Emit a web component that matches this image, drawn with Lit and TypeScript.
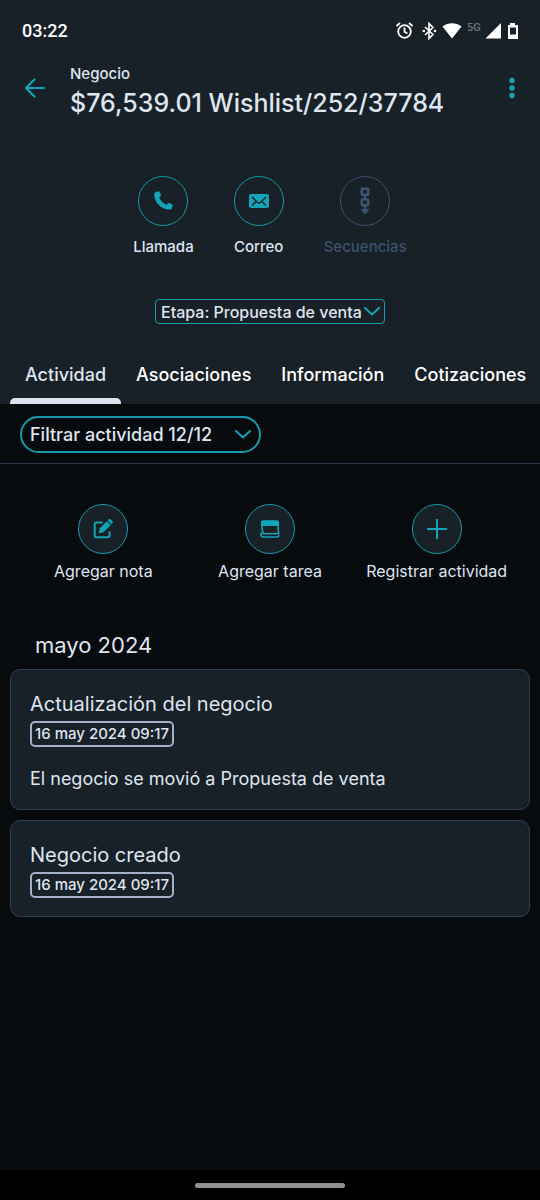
import { LitElement, html, svg, css, nothing } from "lit";
import { customElement, property, state } from "lit/decorators.js";
import { classMap } from "lit/directives/class-map.js";

const icons = {
  phone: svg`<path fill="currentColor" d="M3.200.9 5.500.3c.5-.1 1 .1 1.200.6l1.200 3c.2.5.1 1-.3 1.300L6.200 6.500c.9 2.700 4 6 7.200 7.400l1.400-1.500c.3-.4.8-.5 1.300-.3l3 1.400c.5.2.7.7.6 1.200l-.6 2.400c-.2.7-.7 1.200-1.400 1.300C9.500 19.600.8 11.500 1.200 3.300 1.300 2 2 1.200 3.200.9Z"/>`,
  mail: svg`<rect x="0" y="3" width="20" height="14" rx="2.200" fill="currentColor"/>
    <path d="M3 6l5.300 5.200c1 .9 2.400.9 3.400 0L17 6M3 14.500l3.700-3.600M17 14.500l-3.700-3.600" fill="none" stroke="#182127" stroke-width="1.500"/>`,
  sequence: svg`<g fill="none" stroke="currentColor" stroke-width="2.600">
    <rect x="6.800" y="-2.300" width="6.400" height="6" rx=".6"/><rect x="6.800" y="8.300" width="6.400" height="6" rx="1.600"/>
    <path d="M10 4v4M10 15v5"/></g><path d="M5.500 18h9L10 23.500Z" fill="currentColor"/>`,
  note: svg`<path d="M9.500 3.500H3.500a1.800 1.800 0 0 0-1.800 1.800v11.200a1.800 1.800 0 0 0 1.800 1.800h11.200a1.800 1.800 0 0 0 1.800-1.800v-4" fill="none" stroke="currentColor" stroke-width="2"/>
    <path d="M5.800 14.300l1-5L13.900 2.200l3.900 3.900-7.200 7.200ZM14.700 1.400l.9-.9c.6-.6 1.500-.6 2.100 0l1.700 1.700c.6.6.6 1.500 0 2.100l-.9.9Z" fill="currentColor"/>`,
  task: svg`<path d="M1 7V3.300C1 2 1.800 1.200 3 1.200h14c1.200 0 2 .8 2 2.100V7Z" fill="currentColor"/>
    <path d="M1.900 6.500c0 3 .2 6 1.500 8.300h15.400C18 12 18.300 9.500 18.100 6.500M1.200 13.500v2.500c0 1.300.6 2 1.900 2h13.900c1.200 0 1.900-.6 2-1.800" fill="none" stroke="currentColor" stroke-width="1.600"/>`,
  plus: svg`<path d="M10 0v20M0 10h20" stroke="currentColor" stroke-width="2"/>`,
};

type IconName = keyof typeof icons;

@customElement("round-action")
class RoundAction extends LitElement {
  @property() icon: IconName = "plus";
  @property() label = "";
  @property({ type: Boolean }) disabled = false;
  @property({ type: Boolean }) quiet = false;

  static styles = css`
    :host { display: block; }
    .action {
      display: flex; flex-direction: column; align-items: center; gap: 9px;
      margin: 0 auto; padding: 0; border: 0; background: none;
      font: 500 15px/24px Inter, "Noto Sans", sans-serif;
      color: #dfe5f0; white-space: nowrap; cursor: pointer;
    }
    .action.quiet { gap: 5px; font-size: 16px; font-weight: 400; }
    .action:disabled { color: #3c5270; cursor: default; }
    .ring {
      display: grid; place-items: center; box-sizing: border-box;
      width: 50px; height: 50px; border-radius: 50%;
      border: 1px solid #149bac; background: #182127; color: #12a4b8;
    }
    .action:disabled .ring { border-color: #3c5270; color: #3c5270; }
    .icon { width: 20px; height: 20px; overflow: visible; }
  `;

  render() {
    return html`<button class=${classMap({ action: true, quiet: this.quiet })} ?disabled=${this.disabled}>
      <span class="ring"><svg class="icon" viewBox="0 0 20 20" aria-hidden="true">${icons[this.icon]}</svg></span>
      ${this.label}
    </button>`;
  }
}

@customElement("activity-card")
class ActivityCard extends LitElement {
  @property() heading = "";
  @property() date = "";
  @property() text = "";

  static styles = css`
    :host { display: block; }
    .card {
      padding: 19px 19px 18px; border: 1px solid #304052; border-radius: 10px;
      background: #182127; color: #dfe5f0;
      font-family: Inter, "Noto Sans", sans-serif;
    }
    .heading { margin: 0 0 2px; font-size: 20px; line-height: 30px; font-weight: 400; }
    .date {
      display: block; width: fit-content; box-sizing: border-box; height: 26px; padding: 0 3px;
      border: 2px solid #a3b1c8; border-radius: 5px;
      font-size: 15px; line-height: 22px; font-weight: 500;
    }
    .text { margin: 20px 0 0; font-size: 18px; line-height: 24px; }
  `;

  render() {
    return html`<article class="card">
      <h3 class="heading">${this.heading}</h3>
      <time class="date">${this.date}</time>
      ${this.text ? html`<p class="text">${this.text}</p>` : nothing}
    </article>`;
  }
}

@customElement("app-root")
class AppRoot extends LitElement {
  @state() private tab = "Actividad";

  private tabs = ["Actividad", "Asociaciones", "Información", "Cotizaciones"];
  private entries = [
    { heading: "Actualización del negocio", date: "16 may 2024 09:17", text: "El negocio se movió a Propuesta de venta" },
    { heading: "Negocio creado", date: "16 may 2024 09:17", text: "" },
  ];

  static styles = css`
    :host {
      display: flex; flex-direction: column; min-height: 100vh;
      background: #070b0e; color: #dfe5f0;
      font-family: Inter, "Noto Sans", sans-serif;
    }
    .top { background: #182127; }
    .status {
      display: flex; align-items: center; justify-content: space-between;
      height: 62px; padding: 0 21px 0 22px; box-sizing: border-box;
      font: 500 18px/24px Roboto, sans-serif; color: #fff;
    }
    .signals { display: block; width: 124px; height: 24px; }
    .network { font: 500 11px Roboto, sans-serif; fill: #6c757c; }
    .bar { display: flex; align-items: center; padding: 0 13px 0 20px; height: 52px; }
    .icon-button {
      display: grid; place-items: center; padding: 0; width: 30px; height: 40px;
      border: 0; background: none; color: #12a4b8; cursor: pointer;
    }
    .titles { flex: 1; min-width: 0; padding: 8px 0 0 20px; }
    .kind { margin: 0; font-size: 15px; line-height: 22px; font-weight: 500; }
    .title { margin: 0; font-size: 25px; line-height: 36px; font-weight: 500; white-space: nowrap; overflow: hidden; text-overflow: ellipsis; }
    .contact { display: flex; justify-content: center; gap: 40px; padding-top: 62px; }
    .stage { display: flex; justify-content: center; padding: 40px 0 26px; }
    .picker { display: grid; align-items: center; }
    .picker select {
      grid-area: 1 / 1; appearance: none; box-sizing: border-box; margin: 0;
      border: 1px solid #149bac; color: #dfe5f0; font-family: inherit; font-weight: 500; cursor: pointer;
    }
    .picker svg { grid-area: 1 / 1; justify-self: end; pointer-events: none; width: 16px; height: 9px; }
    .picker.compact select { height: 25px; padding: 0 22px 0 5px; border-radius: 4px; background: #182127; font-size: 16px; }
    .picker.compact svg { margin-right: 5px; }
    .picker.pill select { height: 37px; padding: 0 46px 0 8px; border-radius: 19px; border-width: 2px; background: transparent; font-size: 18px; }
    .picker.pill svg { margin-right: 10px; }
    .tabs { display: flex; padding: 0 10px; overflow: hidden; }
    .tab {
      position: relative; flex: none; padding: 10px 15px 14px; border: 0; background: none; color: #fff;
      font: 500 18px/30px Inter, "Noto Sans", sans-serif; cursor: pointer;
    }
    .tab.active { color: #dfe5f0; }
    .tab.active::after {
      content: ""; position: absolute; left: 0; right: 0; bottom: 0; height: 6px;
      border-radius: 5px 5px 0 0; background: #dfe0ec;
    }
    .filter { display: flex; padding: 12px 20px 10px; border-bottom: 1px solid #2b3a4a; }
    .quick { display: grid; grid-template-columns: repeat(3, 1fr); padding: 40px 20px 0; }
    .month { margin: 47px 35px 9px; font-size: 22px; line-height: 30px; font-weight: 400; }
    .list { display: grid; gap: 10px; padding: 0 10px; }
    .nav { display: grid; place-items: center; height: 30px; margin-top: auto; background: #000; }
    .handle { width: 150px; height: 5px; border-radius: 3px; background: #909090; }
  `;

  private chevron() {
    return html`<svg viewBox="0 0 16 9" aria-hidden="true"><path d="M1 1l7 6.500L15 1" fill="none" stroke="#12a4b8" stroke-width="2" stroke-linecap="round"/></svg>`;
  }

  private signals() {
    return html`<svg class="signals" viewBox="0 0 124 24" aria-hidden="true">
      <g fill="none" stroke="#fff" stroke-width="1.800">
        <circle cx="9.500" cy="12.500" r="6.300"/><path d="M9.500 8.500v4.300l2.800 1.700M1.500 7l3.500-3M17.500 7L14 4"/>
        <path d="M30 8l8 7.500-4 4V4.500l4 4-8 7.500" stroke-width="1.600"/>
      </g>
      <g fill="#fff">
        <circle cx="28.800" cy="12" r="1.300"/><circle cx="40" cy="12" r="1.300"/>
        <path d="M47.500 7.500c5.800-4.300 13.200-4.300 19 0L57 19.500Z"/>
        <path d="M106 4v15.500H90.500Z"/>
        <path fill-rule="evenodd" d="M115 4h5v2h3v14h-10V6h2ZM115 8.500v7h6v-7Z"/>
      </g>
      <text class="network" x="72" y="12">5G</text>
    </svg>`;
  }

  render() {
    return html`
      <header class="top">
        <div class="status"><span>03:22</span>${this.signals()}</div>
        <div class="bar">
          <button class="icon-button" aria-label="Atrás">
            <svg width="22" height="20" viewBox="0 0 22 20"><path d="M20 10H2M10.500 1.500L2 10l8.500 8.500" fill="none" stroke="currentColor" stroke-width="2.200" stroke-linecap="round" stroke-linejoin="round"/></svg>
          </button>
          <div class="titles">
            <p class="kind">Negocio</p>
            <h1 class="title">$76,539.01 Wishlist/252/37784</h1>
          </div>
          <button class="icon-button" aria-label="Más opciones">
            <svg width="6" height="22" viewBox="0 0 6 22" fill="currentColor"><circle cx="3" cy="3.500" r="2.700"/><circle cx="3" cy="11" r="2.700"/><circle cx="3" cy="18.500" r="2.700"/></svg>
          </button>
        </div>
        <div class="contact">
          <round-action icon="phone" label="Llamada"></round-action>
          <round-action icon="mail" label="Correo"></round-action>
          <round-action icon="sequence" label="Secuencias" disabled></round-action>
        </div>
        <div class="stage">
          <div class="picker compact">
            <select aria-label="Etapa"><option>Etapa: Propuesta de venta</option></select>
            ${this.chevron()}
          </div>
        </div>
        <div class="tabs" role="tablist">
          ${this.tabs.map((name) => html`<button role="tab"
            class=${classMap({ tab: true, active: name === this.tab })}
            aria-selected=${name === this.tab}
            @click=${() => (this.tab = name)}>${name}</button>`)}
        </div>
      </header>
      <div class="filter">
        <div class="picker pill">
          <select aria-label="Filtrar actividad"><option>Filtrar actividad 12/12</option></select>
          ${this.chevron()}
        </div>
      </div>
      <div class="quick">
        <round-action icon="note" label="Agregar nota" quiet></round-action>
        <round-action icon="task" label="Agregar tarea" quiet></round-action>
        <round-action icon="plus" label="Registrar actividad" quiet></round-action>
      </div>
      <h2 class="month">mayo 2024</h2>
      <div class="list">
        ${this.entries.map((e) => html`<activity-card .heading=${e.heading} .date=${e.date} .text=${e.text}></activity-card>`)}
      </div>
      <footer class="nav"><div class="handle"></div></footer>
    `;
  }
}
